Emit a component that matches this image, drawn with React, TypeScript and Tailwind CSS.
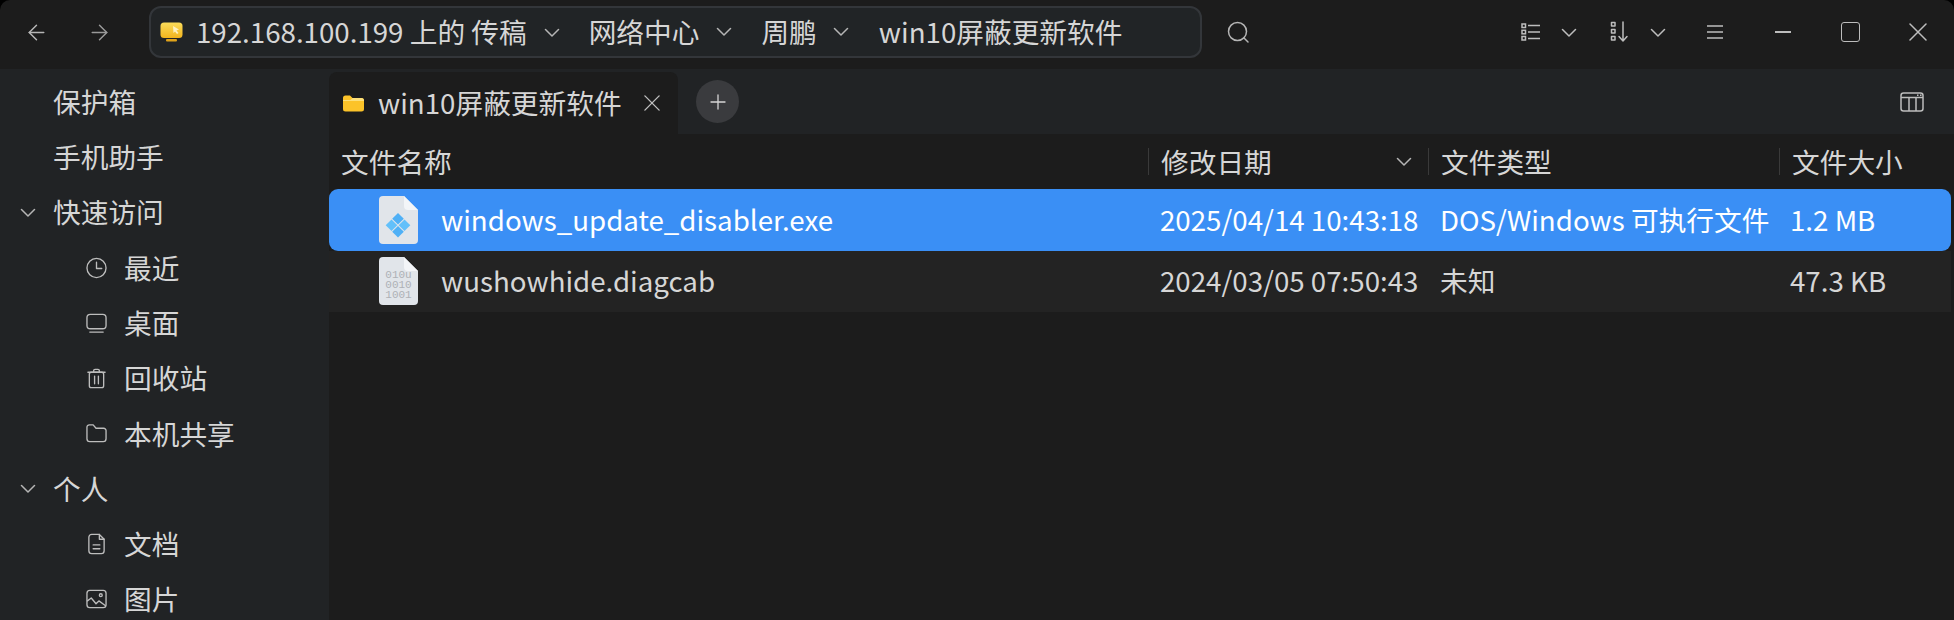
import { ArrowLeft, ArrowRight, Plus } from "lucide-react";
import type { ReactNode } from "react";

const FONT = { fontFamily: '"Noto Sans CJK SC", "Noto Sans", sans-serif' };

/* ── Small drawn icons ─────────────────────────────────── */
function Glyph({ size = 22, children }: { size?: number; children: ReactNode }) {
  return (
    <svg width={size} height={size} viewBox="0 0 22 22" fill="none" stroke="currentColor" strokeWidth="1.4" strokeLinecap="round" strokeLinejoin="round">
      {children}
    </svg>
  );
}

function Chevron({ className = "" }: { className?: string }) {
  return (
    <svg width="16" height="9" viewBox="0 0 16 9" fill="none" stroke="currentColor" strokeWidth="1.500" strokeLinecap="round" strokeLinejoin="round" className={`shrink-0 ${className}`}>
      <path d="M1.500 1.500L8 8l6.500-6.500" />
    </svg>
  );
}

function Cross({ size, className = "" }: { size: number; className?: string }) {
  return (
    <svg width={size} height={size} viewBox="0 0 18 18" fill="none" stroke="currentColor" strokeWidth="1.500" strokeLinecap="round" className={`shrink-0 ${className}`}>
      <path d="M1 1l16 16M17 1L1 17" />
    </svg>
  );
}

function ClockIcon() {
  return (
    <Glyph>
      <circle cx="11" cy="11" r="10" />
      <path d="M11 5v6.500h5.500" />
    </Glyph>
  );
}

function DesktopIcon() {
  return (
    <Glyph>
      <rect x="1" y="2" width="20" height="15" rx="3.500" />
      <path d="M4 20.500h14" />
    </Glyph>
  );
}

function TrashIcon() {
  return (
    <Glyph>
      <path d="M2 5h18M8 5V3.500A1.500 1.500 0 0 1 9.500 2h3A1.500 1.500 0 0 1 14 3.500V5" />
      <rect x="3.500" y="5" width="15" height="16" rx="2" />
      <path d="M9 9v8M13 9v8" />
    </Glyph>
  );
}

function FolderOutlineIcon() {
  return (
    <Glyph>
      <path d="M1 5a2.500 2.500 0 0 1 2.500-2.500h4l3 3.500h8A2.500 2.500 0 0 1 21 8.500V17a3 3 0 0 1-3 3H4a3 3 0 0 1-3-3z" />
    </Glyph>
  );
}

function DocIcon() {
  return (
    <Glyph>
      <path d="M3 4a3 3 0 0 1 3-3h8l5 5v12a3 3 0 0 1-3 3H6a3 3 0 0 1-3-3z" />
      <path d="M14 1v5h5M7.500 12h7M7.500 16h7" />
    </Glyph>
  );
}

function PictureIcon() {
  return (
    <Glyph>
      <rect x="1" y="2" width="20" height="18" rx="3" />
      <circle cx="15.500" cy="7" r="1.500" />
      <path d="M1.500 13l4-3 5 6 3-3 7 5" />
    </Glyph>
  );
}

function ViewListIcon() {
  return (
    <svg width="20" height="20" viewBox="0 0 20 20" fill="none" stroke="currentColor" strokeWidth="1.500">
      <rect x="1" y="2" width="3.500" height="3.500" />
      <rect x="1" y="8.300" width="3.500" height="3.500" />
      <rect x="1" y="14.500" width="3.500" height="3.500" />
      <path d="M7 3.500h12M7 10h12M7 16.500h12" />
    </svg>
  );
}

function SortIcon() {
  return (
    <svg width="20" height="22" viewBox="0 0 20 22" fill="none" stroke="currentColor" strokeWidth="1.500" strokeLinecap="round" strokeLinejoin="round">
      <rect x="1.500" y="1.500" width="3.500" height="3.500" />
      <rect x="1.500" y="8.500" width="3.500" height="3.500" />
      <rect x="1.500" y="15.500" width="3.500" height="3.500" />
      <path d="M13 1v19M9 15.500l4 4.500 4-4.500" />
    </svg>
  );
}

function MenuIcon() {
  return (
    <svg width="18" height="16" viewBox="0 0 18 16" fill="none" stroke="currentColor" strokeWidth="1.600">
      <path d="M1 2h16M1 8h16M1 14h16" />
    </svg>
  );
}

function SearchIcon() {
  return (
    <svg width="24" height="24" viewBox="0 0 24 24" fill="none" stroke="currentColor" strokeWidth="1.500" strokeLinecap="round">
      <circle cx="11.500" cy="11.500" r="9" />
      <path d="M18 18l4 4" />
    </svg>
  );
}

function PanelIcon() {
  return (
    <svg width="24" height="22" viewBox="0 0 24 22" fill="none" stroke="currentColor" strokeWidth="1.500">
      <rect x="1" y="2" width="22" height="18" rx="2.500" />
      <path d="M1 6.500h22M9 6.500V20M16 6.500V20" />
      <path d="M17 4.200h1.500M20 4.200h1.500" />
    </svg>
  );
}

function DriveIcon() {
  return (
    <svg width="23" height="20" viewBox="0 0 23 20" className="shrink-0">
      <defs>
        <linearGradient id="drive" x1="0" y1="0" x2="0" y2="1">
          <stop offset="0" stopColor="#fbdc5a" />
          <stop offset="1" stopColor="#f2b51e" />
        </linearGradient>
      </defs>
      <rect x="0.500" y="0.500" width="22" height="15.500" rx="3.500" fill="url(#drive)" />
      <path d="M13 4l6 3.500-2.500 1 2 2.500-1.500 1-2-2.500-1.500 1.500z" fill="#fdf1c0" />
      <rect x="6" y="17" width="11" height="2.500" rx="1" fill="#e0a31a" />
    </svg>
  );
}

function TabFolderIcon() {
  return (
    <svg width="21" height="17" viewBox="0 0 21 17" className="shrink-0">
      <path d="M0 3a2.500 2.500 0 0 1 2.500-2.500h4.500l2.500 2.500h9A2.500 2.500 0 0 1 21 5.500V14a2.500 2.500 0 0 1-2.500 2.500h-16A2.500 2.500 0 0 1 0 14z" fill="#fcc329" />
      <path d="M0 6h21v-.5A2.500 2.500 0 0 0 18.500 3H9.500L7.500 5H0z" fill="#fde07a" />
    </svg>
  );
}

function FileBase({ children }: { children: ReactNode }) {
  return (
    <svg width="39" height="48" viewBox="0 0 39 48" className="shrink-0">
      <path d="M0 4a4 4 0 0 1 4-4h21l14 14v30a4 4 0 0 1-4 4H4a4 4 0 0 1-4-4z" fill="#e1e5ea" />
      <path d="M25 0l14 14H29a4 4 0 0 1-4-4z" fill="#f3f5f8" />
      {children}
    </svg>
  );
}

function ExeIcon() {
  return (
    <FileBase>
      <path d="M19 17l5.800 5.800L19 28.600l-5.800-5.800z" fill="#4fb0f6" />
      <path d="M12.500 23.500l5.800 5.800-5.800 5.800-5.800-5.800z" fill="#62c0fa" />
      <path d="M25.500 23.500l5.800 5.800-5.800 5.800-5.800-5.800z" fill="#62c0fa" />
      <path d="M19 30l5.800 5.800L19 41.600l-5.800-5.800z" fill="#4fb0f6" />
    </FileBase>
  );
}

function BinaryIcon() {
  return (
    <FileBase>
      <g fill="#aeb1b6" fontSize="11" fontFamily="Liberation Mono, monospace" textAnchor="middle">
        <text x="19.500" y="21">010u</text>
        <text x="19.500" y="31">0010</text>
        <text x="19.500" y="41">1001</text>
      </g>
    </FileBase>
  );
}

/* ── Data ──────────────────────────────────────────────── */
const crumbs = [
  { label: "网络中心", chevron: "ml-[17px] mr-[29px]" },
  { label: "周鹏", chevron: "ml-[16px] mr-[30px]" },
];

const sidebar = [
  { label: "保护箱" },
  { label: "手机助手" },
  { label: "快速访问", group: true },
  { label: "最近", icon: <ClockIcon /> },
  { label: "桌面", icon: <DesktopIcon /> },
  { label: "回收站", icon: <TrashIcon /> },
  { label: "本机共享", icon: <FolderOutlineIcon /> },
  { label: "个人", group: true },
  { label: "文档", icon: <DocIcon /> },
  { label: "图片", icon: <PictureIcon /> },
];

const files = [
  {
    name: "windows_update_disabler.exe",
    date: "2025/04/14 10:43:18",
    type: "DOS/Windows 可执行文件",
    size: "1.2 MB",
    icon: <ExeIcon />,
    row: "bg-[#3a8ff5] text-white rounded-[9px]",
  },
  {
    name: "wushowhide.diagcab",
    date: "2024/03/05 07:50:43",
    type: "未知",
    size: "47.3 KB",
    icon: <BinaryIcon />,
    row: "bg-[#232323] text-[#d6d6d6]",
  },
];

const COLUMNS = "grid grid-cols-[819px_280px_351px_1fr]";

export default function App() {
  return (
    <div className="h-[620px] w-[1954px] overflow-hidden bg-black" style={FONT}>
      <div className="flex h-full flex-col overflow-hidden rounded-t-[10px] bg-[#1c1c1c] text-[27.700px] leading-none text-[#d6d6d6]">
        {/* ── Title bar ─────────────────────────────────── */}
        <header className="flex h-[69px] shrink-0 items-center pb-[5px]">
          <ArrowLeft size={25} strokeWidth={1.400} className="ml-[24px] text-[#b5b5b5]" />
          <ArrowRight size={25} strokeWidth={1.400} className="ml-[38px] text-[#999999]" />
          <div className="ml-[37px] flex h-[52px] w-[1053px] items-center rounded-[12px] border-2 border-[#33363a] bg-[#212426] pl-[9px]">
            <DriveIcon />
            <span className="ml-[13px]">192.168.100.199 上的 传稿</span>
            <Chevron className="ml-[17px] mr-[29px] text-[#b5b5b5]" />
            {crumbs.map((c) => (
              <div key={c.label} className="flex items-center">
                <span>{c.label}</span>
                <Chevron className={`${c.chevron} text-[#b5b5b5]`} />
              </div>
            ))}
            <span>win10屏蔽更新软件</span>
          </div>
          <div className="ml-[24px] text-[#b5b5b5]">
            <SearchIcon />
          </div>
          <div className="ml-auto flex items-center text-[#bdbdbd]">
            <ViewListIcon />
            <Chevron className="ml-[20px]" />
            <div className="ml-[33px]">
              <SortIcon />
            </div>
            <Chevron className="ml-[20px]" />
            <div className="ml-[40px]">
              <MenuIcon />
            </div>
            <div className="ml-[51px] h-[2px] w-[16px] bg-[#bdbdbd]" />
            <div className="ml-[50px] h-[20px] w-[19px] rounded-[3px] border-[1.500px] border-[#bdbdbd]" />
            <Cross size={18} className="ml-[49px] mr-[27px]" />
          </div>
        </header>

        <div className="flex min-h-0 flex-1">
          {/* ── Sidebar ──────────────────────────────────── */}
          <nav className="w-[329px] shrink-0 bg-[#212325] pt-[5px]">
            {sidebar.map((item) => (
              <div key={item.label} className="flex h-[55.300px] items-center">
                {item.group && <Chevron className="ml-[20px] text-[#b5b5b5]" />}
                {item.icon ? (
                  <>
                    <span className="ml-[86px] flex w-[21px] justify-center text-[#bdbdbd]">{item.icon}</span>
                    <span className="ml-[17px]">{item.label}</span>
                  </>
                ) : (
                  <span className={item.group ? "ml-[17px]" : "ml-[53px]"}>{item.label}</span>
                )}
              </div>
            ))}
          </nav>

          <main className="flex min-w-0 flex-1 flex-col">
            {/* ── Tab bar ──────────────────────────────────── */}
            <div className="flex h-[65px] shrink-0 bg-[#212325]">
              <div className="mt-[3px] flex w-[349px] items-center rounded-t-[8px] bg-[#1c1c1c] pl-[14px]">
                <TabFolderIcon />
                <span className="ml-[14px]">win10屏蔽更新软件</span>
                <Cross size={16} className="ml-[22px] text-[#c0c0c0]" />
              </div>
              <div className="ml-[18px] mt-[11px] flex h-[43px] w-[43px] items-center justify-center rounded-full bg-[#3a3b3e]">
                <Plus size={24} strokeWidth={1.300} />
              </div>
              <div className="ml-auto mr-[30px] mt-[22px] text-[#bdbdbd]">
                <PanelIcon />
              </div>
            </div>

            {/* ── Column headers ───────────────────────────── */}
            <div className={`${COLUMNS} h-[55px] shrink-0 items-center pr-[3px]`}>
              <span className="pl-[12px]">文件名称</span>
              <div className="flex h-[27px] items-center border-l border-[#3a3a3a] pl-[12px]">
                <span>修改日期</span>
                <Chevron className="ml-auto mr-[16px] text-[#b5b5b5]" />
              </div>
              <div className="flex h-[27px] items-center border-l border-[#3a3a3a] pl-[12px]">文件类型</div>
              <div className="flex h-[27px] items-center border-l border-[#3a3a3a] pl-[12px]">文件大小</div>
            </div>

            {/* ── File rows ────────────────────────────────── */}
            {files.map((f) => (
              <div key={f.name} className={`${COLUMNS} ${f.row} mr-[3px] h-[61.500px] shrink-0 items-center`}>
                <div className="flex items-center pl-[50px]">
                  {f.icon}
                  <span className="ml-[23px]">{f.name}</span>
                </div>
                <span className="pl-[12px] whitespace-nowrap">{f.date}</span>
                <span className="pl-[12px] whitespace-nowrap">{f.type}</span>
                <span className="pl-[11px] whitespace-nowrap">{f.size}</span>
              </div>
            ))}
          </main>
        </div>
      </div>
    </div>
  );
}
